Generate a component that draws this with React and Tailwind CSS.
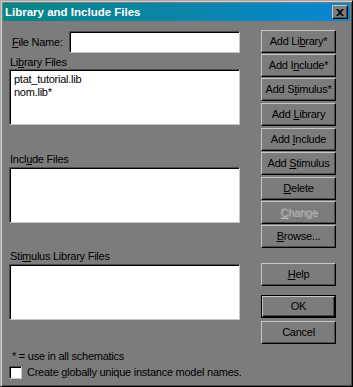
import React from 'react';

const font = { fontFamily: '"Liberation Sans", Arial, sans-serif' };

const buttons = [
    { pre: 'Add Li', key: 'b', post: 'rary*', mt: 'mt-[9px]' },
    { pre: 'Add I', key: 'n', post: 'clude*', mt: 'mt-[1px]' },
    { pre: 'Add S', key: 't', post: 'imulus*', mt: 'mt-[1px]' },
    { pre: 'Add ', key: 'L', post: 'ibrary', mt: 'mt-[2px]' },
    { pre: 'Add ', key: 'I', post: 'nclude', mt: 'mt-[2px]' },
    { pre: 'Add ', key: 'S', post: 'timulus', mt: 'mt-[1px]' },
    { pre: '', key: 'D', post: 'elete', mt: 'mt-[2px]' },
    { pre: '', key: 'C', post: 'hange', mt: 'mt-[1px]', disabled: true },
    { pre: '', key: 'B', post: 'rowse...', mt: 'mt-[1px]' },
    { pre: '', key: 'H', post: 'elp', mt: 'mt-[15px]' },
];

function Key({ children }) {
    return <span className="underline underline-offset-[1px] decoration-1">{children}</span>;
}

function WinButton({ children, disabled, isDefault, className = '' }) {
    const inner = (
        <div
            className={`flex-1 flex items-center justify-center border border-t-[#c6c6c6] border-l-[#c6c6c6] border-r-black border-b-black shadow-[inset_-1px_-1px_0_#4c4c4c] ${disabled ? 'text-[#969696] [text-shadow:1px_1px_0_#bdbdbd]' : 'text-black'}`}
        >
            {children}
        </div>
    );
    if (isDefault) {
        return <div className={`h-[23px] w-[75px] flex border border-black ${className}`}>{inner}</div>;
    }
    return <div className={`h-[23px] w-[75px] flex ${className}`}>{inner}</div>;
}

function Sunken({ className = '' }) {
    return (
        <div className={`shrink-0 bg-white border border-t-[#4c4c4c] border-l-[#4c4c4c] border-r-[#c6c6c6] border-b-[#c6c6c6] shadow-[inset_1px_1px_0_#000] ${className}`} />
    );
}

export default function App() {
    return (
        <div
            style={font}
            className="w-[353px] h-[387px] bg-[#7c7c7c] border border-t-[#a9a9a9] border-l-[#a9a9a9] border-r-black border-b-black shadow-[inset_1px_1px_0_#cfcfcf,inset_-1px_-1px_0_#4c4c4c] p-[2px] flex flex-col text-[11px] leading-[13px] tracking-[-0.25px] text-black select-none"
        >
            {/* Title bar */}
            <div className="h-[18px] flex items-center justify-between pl-[2px] pr-[2px] bg-gradient-to-r from-[#088585] via-[#0a85a8] to-[#0b86d4]">
                <span className="text-white font-bold text-[11.5px] tracking-[0px]">Library and Include Files</span>
                <div className="w-[16px] h-[14px] flex items-center justify-center bg-[#7c7c7c] border border-t-[#c6c6c6] border-l-[#c6c6c6] border-r-black border-b-black shadow-[inset_-1px_-1px_0_#4c4c4c]">
                    <svg width="8" height="7" viewBox="0 0 8 7">
                        <path d="M0 0h2l2 2 2-2h2L5 3.5 8 7H6L4 5 2 7H0l3-3.5z" fill="#000" />
                    </svg>
                </div>
            </div>

            <div className="flex flex-1">
                {/* Left column */}
                <div className="ml-[6px] w-[231px] flex flex-col">
                    <div className="mt-[10px] h-[22px] flex items-center">
                        <span className="w-[60px] pl-[3px]"><Key>F</Key>ile Name:</span>
                        <Sunken className="w-[171px] h-[22px]" />
                    </div>

                    <div className="mt-[3px] h-[13px] pl-[1px]">Li<Key>b</Key>rary Files</div>
                    <div className="h-[56px] bg-white border border-t-[#4c4c4c] border-l-[#4c4c4c] border-r-[#c6c6c6] border-b-[#c6c6c6] shadow-[inset_1px_1px_0_#000] pt-[3px] pl-[4px]">
                        <div>ptat_tutorial.lib</div>
                        <div>nom.lib*</div>
                    </div>

                    <div className="mt-[28px] h-[14px] pl-[1px]">Incl<Key>u</Key>de Files</div>
                    <Sunken className="h-[56px]" />

                    <div className="mt-[27px] h-[14px] pl-[1px]">Sti<Key>m</Key>ulus Library Files</div>
                    <Sunken className="h-[56px]" />

                    <div className="mt-[30px] h-[13px] pl-[3px]">* = use in all schematics</div>
                    <div className="mt-[3px] h-[13px] flex items-center gap-[5px] whitespace-nowrap">
                        <Sunken className="w-[13px] h-[13px]" />
                        <span>Create <Key>g</Key>lobally unique instance model names.</span>
                    </div>
                </div>

                {/* Right column */}
                <div className="ml-[21px] w-[75px] flex flex-col">
                    {buttons.map(b => (
                        <WinButton key={b.pre + b.key + b.post} disabled={b.disabled} className={b.mt}>
                            <span>{b.pre}<Key>{b.key}</Key>{b.post}</span>
                        </WinButton>
                    ))}
                    <WinButton isDefault className="mt-[9px]">OK</WinButton>
                    <WinButton className="mt-[3px]">Cancel</WinButton>
                </div>
            </div>
        </div>
    );
}
